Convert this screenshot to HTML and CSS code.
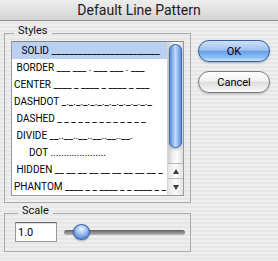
FILE: index.html
```html
<!DOCTYPE html>
<html lang="en">
<head>
    <meta charset="UTF-8">
    <meta name="viewport" content="width=device-width, initial-scale=1.0">
    <title>Default Line Pattern</title>
    <link rel="stylesheet" href="styles.css">
</head>
<body>
    <div class="titlebar">Default Line Pattern</div>
    <div class="dialog">
        <div class="left">
            <fieldset class="group styles">
                <legend>Styles</legend>
                <div class="listbox">
                    <ul class="rows">
                        <li class="selected">   SOLID ________________________</li>
                        <li> BORDER ___ ___ . ___ ___ . ___</li>
                        <li>CENTER ____ _ ____ _ ____ _ ___</li>
                        <li>DASHDOT _._._._._._._._._._._._._</li>
                        <li> DASHED _ _ _ _ _ _ _ _ _ _ _ _ _</li>
                        <li> DIVIDE __..__..__..__..__..__.</li>
                        <li>      DOT .....................</li>
                        <li> HIDDEN __ __ __ __ __ __ __ __ __ _</li>
                        <li>PHANTOM ____ _ _ ____ _ _ ____ _ _</li>
                    </ul>
                    <div class="scrollbar">
                        <div class="track"><div class="thumb"></div></div>
                        <div class="arrow up"></div>
                        <div class="arrow down"></div>
                    </div>
                </div>
            </fieldset>
            <fieldset class="group scale">
                <legend>Scale</legend>
                <div class="scale-row">
                    <input class="scale-field" type="text" value="1.0">
                    <input class="slider" type="range" min="0" max="12" value="1">
                </div>
            </fieldset>
        </div>
        <div class="buttons">
            <button class="aqua default">OK</button>
            <button class="aqua">Cancel</button>
        </div>
    </div>
</body>
</html>
```

FILE: styles.css
```css
body {
    margin: 0;
    width: 278px;
    height: 261px;
    overflow: hidden;
    font-family: Roboto, "Liberation Sans", sans-serif;
    color: #000;
    background: repeating-linear-gradient(to bottom, #eeeeee 0, #eeeeee 2px, #e7e7e7 2px, #e7e7e7 4px);
}
.titlebar {
    height: 20px;
    line-height: 20px;
    text-align: center;
    font-size: 14px;
    color: #1c1c1c;
    background: linear-gradient(#ededed, #d4d4d4);
    border-bottom: 1px solid #8e8e8e;
}
.dialog {
    display: flex;
    gap: 7px;
    padding: 4px 0 0 4px;
}
.left {
    width: 187px;
}
.group {
    margin: 0;
    min-width: 0;
    border: 1px solid #ababab;
}
.group legend {
    margin-left: 3px;
    padding: 0 4px 4px;
    font-size: 11px;
    line-height: 12px;
    color: #111;
}
.styles {
    padding: 0 6px 6px;
}
.scale {
    margin-top: 2px;
    padding: 1px 5px 9px 10px;
}
.listbox {
    display: flex;
    height: 155px;
    box-sizing: border-box;
    border: 1px solid #9a9a9a;
    border-top-color: #858585;
    background: #fff;
}
.rows {
    flex: 1;
    min-width: 0;
    margin: 0;
    padding: 0;
    list-style: none;
    overflow: hidden;
}
.rows li {
    height: 17px;
    line-height: 17px;
    padding-left: 2px;
    font-size: 10px;
    white-space: pre;
    overflow: hidden;
}
.rows li.selected {
    background-color: #b9d0f1;
}
.scrollbar {
    width: 15px;
    display: flex;
    flex-direction: column;
    border-left: 1px solid #d6d6d6;
}
.track {
    flex: 1;
    padding: 2px 1px 0;
    background: linear-gradient(to right, #cfcfcf, #f2f2f2 35%, #fdfdfd 60%, #dcdcdc);
}
.thumb {
    height: 104px;
    border-radius: 7px;
    box-shadow: inset 0 0 0 1px #3e6cb8, 0 2px 3px rgba(0, 0, 0, 0.2);
    background: linear-gradient(to right, #4b7ccc, #8fb6ee 30%, #c2dafb 50%, #8fb6ee 70%, #4b7ccc);
}
.arrow {
    display: flex;
    align-items: center;
    justify-content: center;
    border-top: 1px solid #b9b9b9;
    background: linear-gradient(to right, #e4e4e4, #fbfbfb 50%, #e4e4e4);
}
.arrow.up {
    height: 14px;
}
.arrow.down {
    height: 16px;
}
.arrow::before {
    content: "";
    border-left: 3px solid transparent;
    border-right: 3px solid transparent;
}
.arrow.up::before {
    border-bottom: 5px solid #3a3a3a;
}
.arrow.down::before {
    border-top: 5px solid #3a3a3a;
}
.scale-row {
    display: flex;
    align-items: center;
}
.scale-field {
    width: 42px;
    height: 20px;
    box-sizing: border-box;
    margin: 0;
    padding: 0 2px;
    border: 1px solid #9a9a9a;
    border-top-color: #6a6a6a;
    box-shadow: inset 0 1px 1px rgba(0, 0, 0, 0.15);
    font-family: Roboto, "Liberation Sans", sans-serif;
    font-size: 11px;
    color: #000;
    background: #fff;
}
.slider {
    -webkit-appearance: none;
    appearance: none;
    flex: 1;
    min-width: 0;
    height: 17px;
    margin: 0 0 0 7px;
    background: transparent;
}
.slider::-webkit-slider-runnable-track {
    height: 5px;
    border-radius: 3px;
    background: linear-gradient(#5f5f5f, #8c8c8c 50%, #b8b8b8);
}
.slider::-webkit-slider-thumb {
    -webkit-appearance: none;
    width: 17px;
    height: 16px;
    margin-top: -6px;
    border-radius: 50%;
    border: 1px solid #3d64a6;
    box-sizing: border-box;
    background: radial-gradient(circle at 50% 30%, #f0f6ff 0, #a9c9f3 35%, #5d8fda 75%, #3f71c4 100%);
    box-shadow: 0 1px 2px rgba(0, 0, 0, 0.3);
}
.buttons {
    display: flex;
    flex-direction: column;
    gap: 9px;
    padding-top: 15px;
}
.aqua {
    width: 72px;
    height: 22px;
    margin: 0;
    padding: 0;
    border: 1px solid #7c7c7c;
    border-radius: 11px;
    font-family: Roboto, "Liberation Sans", sans-serif;
    font-size: 11px;
    color: #000;
    background: linear-gradient(#ffffff, #f1f1f1 45%, #dddddd 52%, #efefef 85%, #ffffff);
    box-shadow: 0 1px 2px rgba(0, 0, 0, 0.25);
}
.aqua.default {
    border-color: #33609f;
    background: linear-gradient(#cfe0f8, #9fc2ef 45%, #6b9fe6 52%, #8cbff6 82%, #c8e8ff);
}
```
